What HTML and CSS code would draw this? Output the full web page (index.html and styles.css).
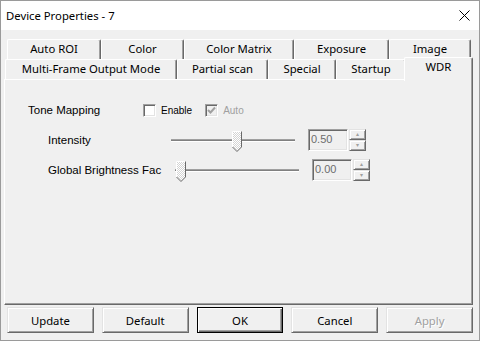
FILE: index.html
```html
<!DOCTYPE html>
<html>
<head>
    <title>Device Properties - 7</title>
    <link rel="stylesheet" href="styles.css">
</head>
<body>
<div class="window">
    <div class="titlebar">
        <span class="title">Device Properties - 7</span>
        <span class="close">
            <svg width="11" height="11" viewBox="0 0 11 11"><path d="M0.5 0.5 L10.5 10.5 M10.5 0.5 L0.5 10.5" stroke="#000" stroke-width="1" fill="none"/></svg>
        </span>
    </div>

    <div class="dialog">
        <div class="tab-row back">
            <div class="tab">Auto ROI</div>
            <div class="tab">Color</div>
            <div class="tab">Color Matrix</div>
            <div class="tab">Exposure</div>
            <div class="tab">Image</div>
        </div>
        <div class="tab-row front">
            <div class="tab">Multi-Frame Output Mode</div>
            <div class="tab">Partial scan</div>
            <div class="tab">Special</div>
            <div class="tab">Startup</div>
            <div class="tab active">WDR</div>
        </div>

        <div class="panel">
            <div class="row tone-row">
                <span class="label tone-label">Tone Mapping</span>
                <label class="check">
                    <span class="box"></span>
                    <span>Enable</span>
                </label>
                <label class="check disabled">
                    <span class="box">
                        <svg width="9" height="9" viewBox="0 0 9 9"><path d="M1 4 L3.5 6.5 L8 1.5" stroke="#a0a0a0" stroke-width="2" fill="none"/></svg>
                    </span>
                    <span>Auto</span>
                </label>
            </div>

            <div class="row slider-row">
                <span class="label intensity-label">Intensity</span>
                <div class="slider">
                    <div class="track"></div>
                    <svg class="thumb thumb-mid" width="10" height="21" viewBox="0 0 10 21">
                        <defs>
                            <pattern id="dots1" width="2" height="2" patternUnits="userSpaceOnUse">
                                <rect width="2" height="2" fill="#fff"/>
                                <rect width="1" height="1" fill="#d4d4d4"/>
                                <rect x="1" y="1" width="1" height="1" fill="#d4d4d4"/>
                            </pattern>
                        </defs>
                        <path d="M0.5 16 L0.5 0.5 L9.5 0.5 L9.5 16 L5 20.5 Z" fill="url(#dots1)"/>
                        <path d="M0.5 16 L0.5 0.5 L9 0.5" stroke="#fff" fill="none"/>
                        <path d="M9.5 0.5 L9.5 16 L5 20.5 L0.5 16" stroke="#696969" fill="none"/>
                    </svg>
                </div>
                <div class="spin">
                    <div class="edit">0.50</div>
                    <div class="arrows">
                        <span class="arrow up">&#9652;</span>
                        <span class="arrow down">&#9662;</span>
                    </div>
                </div>
            </div>

            <div class="row slider-row second">
                <span class="label global-label">Global Brightness Fac</span>
                <div class="slider">
                    <div class="track"></div>
                    <svg class="thumb thumb-min" width="10" height="21" viewBox="0 0 10 21">
                        <defs>
                            <pattern id="dots2" width="2" height="2" patternUnits="userSpaceOnUse">
                                <rect width="2" height="2" fill="#fff"/>
                                <rect width="1" height="1" fill="#d4d4d4"/>
                                <rect x="1" y="1" width="1" height="1" fill="#d4d4d4"/>
                            </pattern>
                        </defs>
                        <path d="M0.5 16 L0.5 0.5 L9.5 0.5 L9.5 16 L5 20.5 Z" fill="url(#dots2)"/>
                        <path d="M0.5 16 L0.5 0.5 L9 0.5" stroke="#fff" fill="none"/>
                        <path d="M9.5 0.5 L9.5 16 L5 20.5 L0.5 16" stroke="#696969" fill="none"/>
                    </svg>
                </div>
                <div class="spin">
                    <div class="edit">0.00</div>
                    <div class="arrows">
                        <span class="arrow up">&#9652;</span>
                        <span class="arrow down">&#9662;</span>
                    </div>
                </div>
            </div>
        </div>

        <div class="buttons">
            <button class="btn">Update</button>
            <button class="btn">Default</button>
            <button class="btn default">OK</button>
            <button class="btn">Cancel</button>
            <button class="btn" disabled>Apply</button>
        </div>
    </div>
</div>
</body>
</html>
```

FILE: styles.css
```css
* {
    box-sizing: border-box;
}
body {
    margin: 0;
    background: #fff;
    font-family: "Noto Sans", "Open Sans", sans-serif;
    font-size: 11.3px;
    color: #000;
}
.window {
    width: 480px;
    height: 341px;
    border: 1px solid #9a9a9a;
    background: #f0f0f0;
    display: flex;
    flex-direction: column;
}

/* title bar */
.titlebar {
    height: 29px;
    background: #fff;
    display: flex;
    align-items: center;
    justify-content: space-between;
    padding: 0 9px 0 5px;
}
.close svg {
    display: block;
}

.dialog {
    flex: 1;
    display: flex;
    flex-direction: column;
    padding: 9px 6px 0 3px;
}

/* tabs */
.tab-row {
    display: flex;
    height: 20px;
}
.tab-row.back {
    margin-left: 3px;
}
.tab-row.front {
    margin-left: 1px;
}
.tab {
    height: 20px;
    background: #f0f0f0;
    border-top: 1px solid #fff;
    border-left: 1px solid #fff;
    border-right: 1px solid #696969;
    box-shadow: inset -1px 0 #a0a0a0;
    border-radius: 2px 2px 0 0;
    text-align: center;
    line-height: 18px;
    white-space: nowrap;
}
.back .tab:nth-child(1) { width: 94px; }
.back .tab:nth-child(2) { width: 83px; }
.back .tab:nth-child(3) { width: 110px; }
.back .tab:nth-child(4) { width: 95px; }
.back .tab:nth-child(5) { width: 82px; }
.front .tab:nth-child(1) { width: 172px; }
.front .tab:nth-child(2) { width: 91px; }
.front .tab:nth-child(3) { width: 68px; }
.front .tab:nth-child(4) { width: 70px; }
.front .tab:nth-child(5) { width: 65px; }
.tab.active {
    position: relative;
    z-index: 1;
    width: 69px !important;
    height: 24px;
    margin: -2px -2px 0 -2px;
}

/* page */
.panel {
    height: 226px;
    border-top: 1px solid #fff;
    border-left: 1px solid #fff;
    border-right: 1px solid #696969;
    border-bottom: 1px solid #696969;
    box-shadow: inset -1px -1px #a0a0a0;
    padding-left: 23px;
    font-family: "Liberation Sans", Arial, sans-serif;
    font-size: 11.5px;
    line-height: 13px;
}
.row {
    display: flex;
    align-items: center;
}
.tone-row {
    height: 20px;
    margin-top: 20px;
}
.slider-row {
    height: 22px;
    margin-top: 9px;
}
.slider-row.second {
    margin-top: 8px;
}
.label {
    flex: none;
}
.tone-label {
    width: 115px;
}
.intensity-label {
    margin-left: 20px;
    width: 123px;
}
.global-label {
    margin-left: 20px;
    width: 127px;
}

/* checkboxes */
.check {
    display: flex;
    align-items: center;
    margin-right: 13px;
    font-size: 10px;
}
.box {
    width: 13px;
    height: 13px;
    margin-right: 5px;
    background: #fff;
    border-top: 1px solid #a0a0a0;
    border-left: 1px solid #a0a0a0;
    border-right: 1px solid #fff;
    border-bottom: 1px solid #fff;
    box-shadow: inset 1px 1px #696969, inset -1px -1px #e3e3e3;
    display: flex;
    align-items: center;
    justify-content: center;
}
.check.disabled {
    color: #a0a0a0;
}
.check.disabled .box {
    background: #f0f0f0;
}
.box svg {
    display: block;
}

/* sliders */
.slider {
    position: relative;
    width: 124px;
    height: 22px;
    flex: none;
}
.track {
    position: absolute;
    left: 0;
    right: 0;
    top: 10px;
    height: 3px;
    border-top: 1px solid #a0a0a0;
    border-bottom: 1px solid #fff;
    background: #808080;
}
.thumb {
    position: absolute;
    top: 2px;
}
.thumb-mid {
    left: 61px;
}
.thumb-min {
    left: 1px;
}

/* spin boxes */
.spin {
    display: flex;
    margin-left: 13px;
    height: 22px;
}
.edit {
    width: 40px;
    height: 22px;
    padding: 3px 0 0 2px;
    color: #6d6d6d;
    font-size: 11px;
    border-top: 1px solid #a0a0a0;
    border-left: 1px solid #a0a0a0;
    border-right: 1px solid #fff;
    border-bottom: 1px solid #fff;
    box-shadow: inset 1px 1px #696969, inset -1px -1px #e3e3e3;
}
.arrows {
    display: flex;
    flex-direction: column;
    margin-left: 1px;
}
.arrow {
    width: 17px;
    height: 11px;
    font-size: 6px;
    line-height: 9px;
    text-align: center;
    color: #a0a0a0;
    border-top: 1px solid #e3e3e3;
    border-left: 1px solid #e3e3e3;
    border-right: 1px solid #696969;
    border-bottom: 1px solid #696969;
    box-shadow: inset 1px 1px #fff, inset -1px -1px #a0a0a0;
}

/* buttons */
.buttons {
    display: flex;
    gap: 8px;
    margin-top: 2px;
    padding-left: 3px;
}
.btn {
    width: 87px;
    height: 26px;
    padding: 0;
    font-family: "Noto Sans", "Open Sans", sans-serif;
    font-size: 11.3px;
    color: #000;
    background: #f0f0f0;
    border-top: 1px solid #e3e3e3;
    border-left: 1px solid #e3e3e3;
    border-right: 1px solid #696969;
    border-bottom: 1px solid #696969;
    box-shadow: inset 1px 1px #fff, inset -1px -1px #a0a0a0;
}
.btn.default {
    border: 1px solid #000;
    box-shadow: inset 1px 1px #fff, inset -1px -1px #696969, inset -2px -2px #a0a0a0;
}
.btn:disabled {
    color: #a0a0a0;
    text-shadow: 1px 1px #fff;
}
```
